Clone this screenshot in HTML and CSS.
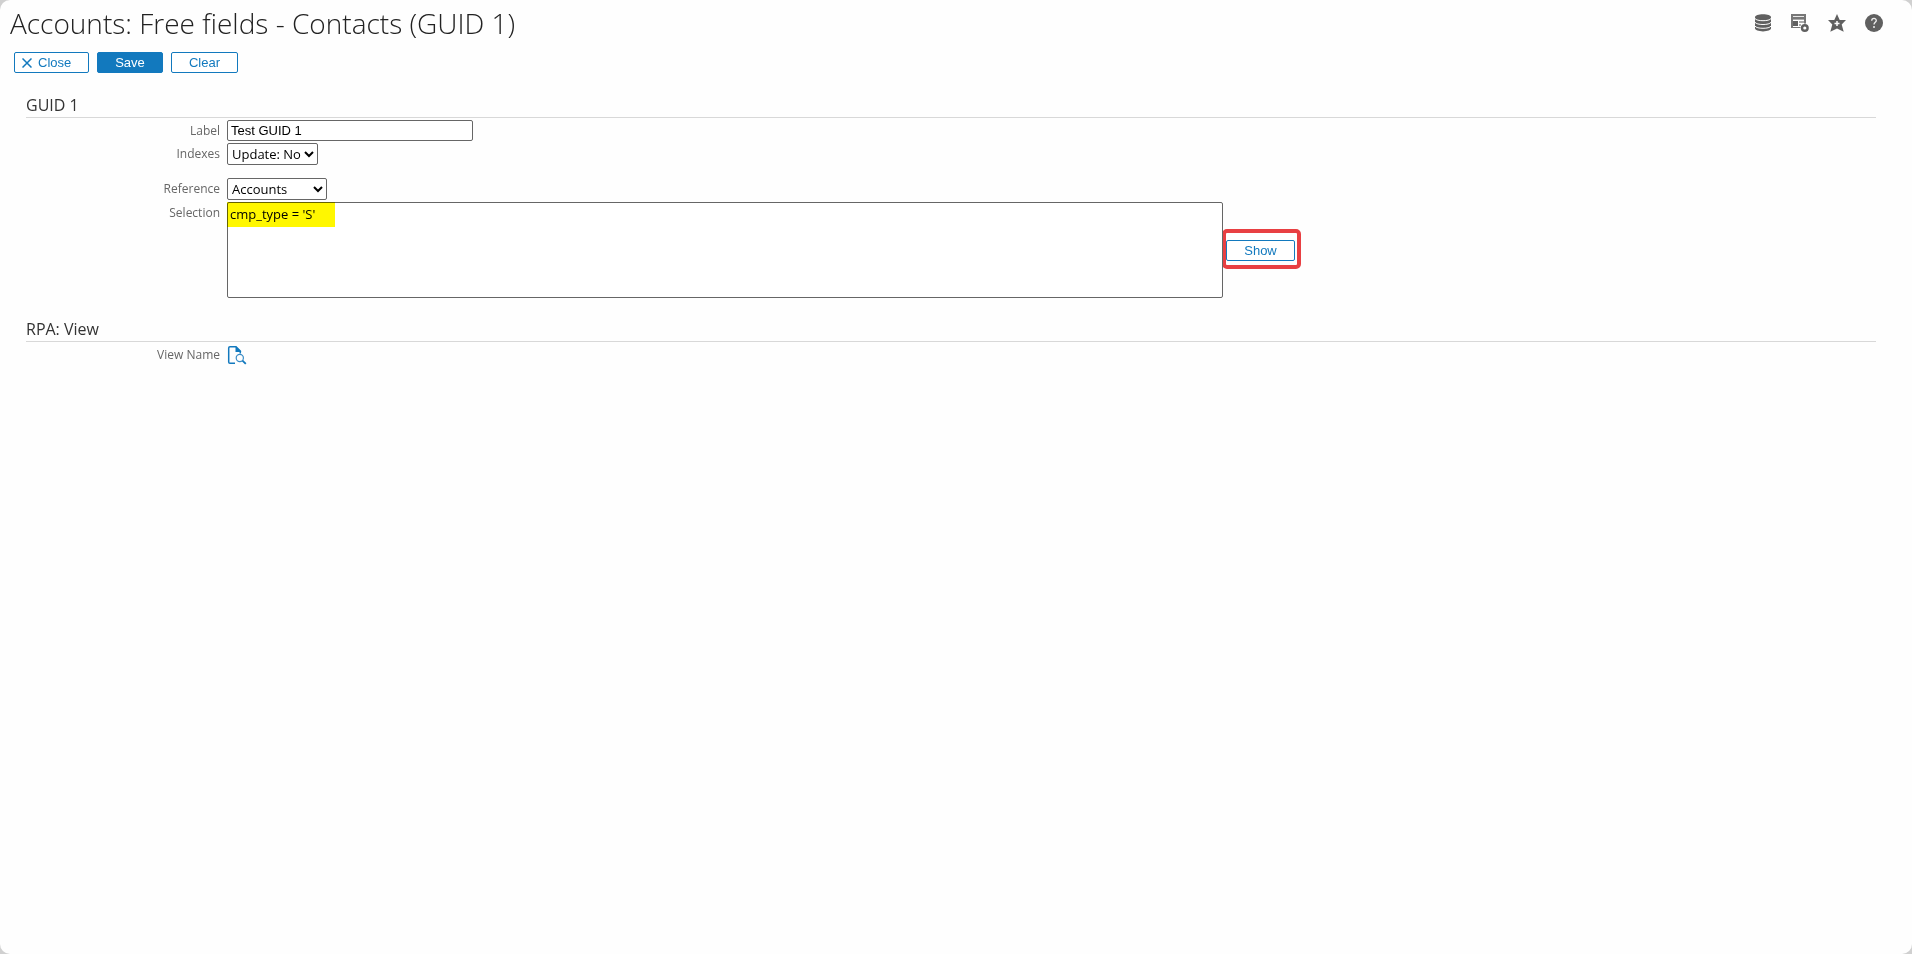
FILE: index.html
```html
<!DOCTYPE html>
<html lang="en">
    <head>
        <meta charset="utf-8">
        <title>Accounts: Free fields - Contacts (GUID 1)</title>
        <link rel="stylesheet" href="styles.css">
    </head>

    <body>
        <div class="page">

            <header class="header">
                <h1 class="title">Accounts: Free fields - Contacts (GUID 1)</h1>
                <nav class="tools">
                    <a href="#" aria-label="Database">
                        <svg width="18" height="18" viewBox="0 0 18 18">
                            <path fill="#606060" d="M1 3.2C1 1.400 4.500 .2 9 .2s8 1.200 8 3v11.400c0 1.600-3.500 2.800-8 2.800s-8-1.200-8-2.800z"/>
                            <path fill="none" stroke="#fefefe" stroke-width="1" d="M1 4.500c1 1.500 4 2.200 8 2.200s7-.7 8-2.200M1 8.300c1 1.500 4 2.200 8 2.200s7-.7 8-2.200M1 12.100c1 1.500 4 2.200 8 2.200s7-.7 8-2.200"/>
                        </svg>
                    </a>
                    <a href="#" aria-label="Form settings">
                        <svg width="18" height="18" viewBox="0 0 18 18">
                            <path fill="#777" d="M0 0h15v10h-2V5H2v8h8v1H0z"/>
                            <path fill="#e8e8e8" d="M2 2h11v1H2z"/>
                            <path fill="#aaa" d="M2 5h11v1H2zM8 7h5v2H8zM8 10h2v2H8z"/>
                            <path fill="#606060" d="M2 7h5v5H2z"/>
                            <circle cx="13.800" cy="14" r="4.500" fill="#fefefe"/>
                            <circle cx="13.800" cy="14" r="2.800" fill="#fefefe" stroke="#606060" stroke-width="2.400"/>
                        </svg>
                    </a>
                    <a href="#" aria-label="Add to favourites">
                        <svg width="18" height="18" viewBox="0 0 18 18">
                            <path fill="#606060" d="M9 0l2.700 6H18l-4.300 4.600 2 7.200L9 14.600l-6.700 3.200 2-7.200L0 6h6.300z"/>
                            <path stroke="#fefefe" stroke-width="1.500" d="M9 7v5M6.500 9.500h5"/>
                        </svg>
                    </a>
                    <a href="#" aria-label="Help">
                        <svg width="18" height="18" viewBox="0 0 18 18">
                            <circle cx="9" cy="9" r="9" fill="#606060"/>
                            <path fill="none" stroke="#eee" stroke-width="1.300" d="M6.700 6.700c0-3 4.600-2.900 4.600-.2 0 1.800-2.300 1.900-2.300 4.100"/>
                            <circle cx="9" cy="13" r="1" fill="#eee"/>
                        </svg>
                    </a>
                </nav>
            </header>

            <form>
                <div class="buttons">
                    <button type="button" class="button close">
                        <svg width="10" height="10" viewBox="0 0 10 10"><path stroke="#1279be" stroke-width="1.500" d="M.5.5l9 9M9.500.5l-9 9"/></svg>
                        Close
                    </button>
                    <button type="button" class="button save">Save</button>
                    <button type="button" class="button clear">Clear</button>
                </div>

                <section class="section">
                    <h2 class="section_title">GUID 1</h2>
                    <div class="row">
                        <label for="label_input">Label</label>
                        <input type="text" class="text_input" id="label_input" name="label" value="Test GUID 1">
                    </div>
                    <div class="row">
                        <label for="indexes">Indexes</label>
                        <select class="select" id="indexes" name="indexes">
                            <option>Update: No</option>
                            <option>Update: Yes</option>
                        </select>
                    </div>
                    <div class="row reference">
                        <label for="reference">Reference</label>
                        <select class="select wide" id="reference" name="reference">
                            <option>Accounts</option>
                        </select>
                    </div>
                    <div class="row">
                        <label for="selection">Selection</label>
                        <div class="selection">
                            <textarea class="textarea" id="selection" name="selection" spellcheck="false">cmp_type = 'S'</textarea>
                            <span class="marker"></span>
                        </div>
                        <div class="show_box">
                            <button type="button" class="button show">Show</button>
                        </div>
                    </div>
                </section>

                <section class="section">
                    <h2 class="section_title">RPA: View</h2>
                    <div class="row">
                        <label for="view_name">View Name</label>
                        <button type="button" class="icon_button" id="view_name">
                            <svg width="20" height="20" viewBox="0 0 20 20">
                                <path fill="none" stroke="#1279be" stroke-width="1.500" d="M8 18.200H3q-1.300 0-1.300-1.300V3q0-1.300 1.300-1.300h6l4.300 4.300v2.500"/>
                                <path fill="#1279be" d="M8.500 1l6 6h-6z"/>
                                <circle cx="12.800" cy="13" r="3.600" fill="#fefefe" stroke="#3a8cc6" stroke-width="1.200"/>
                                <path stroke="#1279be" stroke-width="1.800" d="M15.500 15.600l3.300 3.300"/>
                            </svg>
                        </button>
                    </div>
                </section>
            </form>

        </div>
    </body>
</html>
```
FILE: styles.css
```css
body {
    margin: 0;
    background-color: #d0d0d0;
    font-family: "Open Sans", "Noto Sans", sans-serif;
}

.page {
    min-height: 100vh;
    box-sizing: border-box;
    border-radius: 10px;
    background-color: #fefefe;
}

.header {
    display: flex;
    justify-content: space-between;
    padding: 3px 29px 0 10px;
}

.title {
    margin: 0;
    font-size: 28px;
    line-height: 40px;
    font-weight: 300;
    color: #222;
}

.tools {
    display: flex;
    gap: 19px;
    padding-top: 11px;
}

.tools a {
    width: 18px;
    height: 18px;
}

svg {
    display: block;
}

.buttons {
    display: flex;
    gap: 8px;
    padding: 9px 14px 1px;
}

.button {
    height: 21px;
    box-sizing: border-box;
    padding: 0;
    border: 1px solid #1279be;
    border-radius: 2px;
    background-color: #fff;
    color: #1279be;
    font-family: "Liberation Sans", Arial, sans-serif;
    font-size: 13px;
    cursor: pointer;
}

.close {
    display: flex;
    align-items: center;
    gap: 6px;
    width: 75px;
    padding-left: 7px;
}

.save {
    width: 66px;
    background-color: #1279be;
    color: #fff;
}

.clear {
    width: 67px;
}

.section {
    margin: 19px 36px 0 26px;
}

.section_title {
    margin: 0 0 2px;
    border-bottom: 1px solid #d8d8d8;
    font-size: 16px;
    line-height: 24px;
    font-weight: 400;
    color: #333;
}

.row {
    display: flex;
    align-items: flex-start;
    margin-bottom: 2px;
}

.row label {
    width: 194px;
    margin-right: 7px;
    font-size: 12px;
    line-height: 21px;
    text-align: right;
    color: #666;
}

.text_input, .select, .textarea {
    box-sizing: border-box;
    border: 1px solid #666;
    border-radius: 2px;
    background-color: #fff;
    color: #000;
    font-family: "Open Sans", "Noto Sans", sans-serif;
    font-size: 13px;
}

.text_input {
    width: 246px;
    height: 21px;
    padding: 0 3px;
    font-family: "Liberation Sans", Arial, sans-serif;
}

.select {
    width: 91px;
    height: 22px;
    padding: 0;
}

.wide {
    width: 100px;
}

.reference {
    margin-top: 13px;
}

.selection {
    position: relative;
    width: 996px;
}

.textarea {
    display: block;
    width: 100%;
    height: 96px;
    padding: 2px;
    resize: none;
}

/* yellow marker over the first line */
.marker {
    position: absolute;
    top: 0;
    left: 0;
    width: 108px;
    height: 25px;
    background-color: #fff700;
    mix-blend-mode: multiply;
    pointer-events: none;
}

.show_box {
    align-self: center;
    margin: 0 0 2px -1px;
    padding: 7px 2px 4px 0;
    border: 4px solid #e83f42;
    border-radius: 5px;
}

.show {
    display: block;
    width: 69px;
}

.icon_button {
    padding: 1px 0 0;
    border: none;
    background: none;
    cursor: pointer;
}
```
